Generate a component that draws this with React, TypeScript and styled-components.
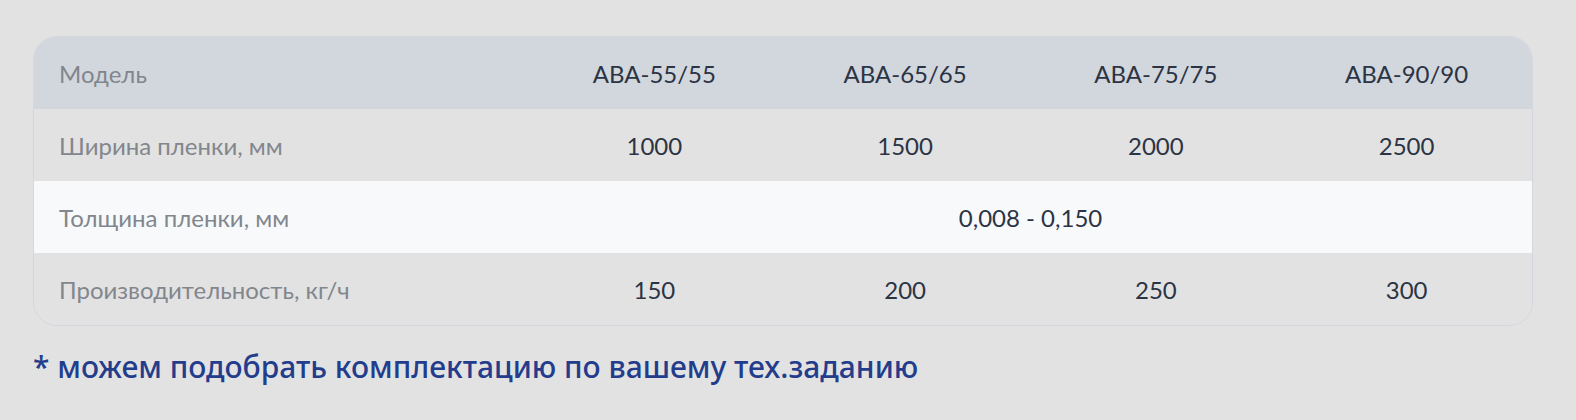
import React from "react";
import styled, { createGlobalStyle } from "styled-components";

const Global = createGlobalStyle`
  html, body { margin: 0; padding: 0; background: #e2e2e2; }
  body { font-family: "Lato", "Noto Sans", sans-serif; }
`;

const Page = styled.div`
  padding: 36px 43px 0 33px;
  display: flex;
  flex-direction: column;
  gap: 21px;
`;

const Table = styled.div`
  width: 1500px;
  box-sizing: border-box;
  border: 1px solid #d3d7de;
  border-radius: 24px;
  overflow: hidden;
  display: grid;
  grid-template-columns: 495px repeat(4, 1fr);
`;

const Row = styled.div<{ $bg: string }>`
  display: contents;
  & > * { background: ${(p) => p.$bg}; }
`;

const Cell = styled.div<{ $span?: number }>`
  height: 72px;
  display: flex;
  align-items: center;
  justify-content: center;
  font-size: 24px;
  color: #2b3444;
  grid-column: ${(p) => (p.$span ? `span ${p.$span}` : "auto")};
`;

const Label = styled.div`
  height: 72px;
  display: flex;
  align-items: center;
  padding-left: 25px;
  font-size: 24px;
  color: #82868d;
`;

const Note = styled.div`
  font-family: "Noto Sans", "Open Sans", sans-serif;
  font-weight: 500;
  font-size: 30px;
  line-height: 40px;
  color: #233d8c;
`;

const models = ["АВА-55/55", "АВА-65/65", "АВА-75/75", "АВА-90/90"];

export default function App() {
  return (
    <>
      <Global />
      <Page>
        <Table>
          <Row $bg="#d2d6dd">
            <Label>Модель</Label>
            {models.map((m) => (
              <Cell key={m}>{m}</Cell>
            ))}
          </Row>
          <Row $bg="#e2e2e2">
            <Label>Ширина пленки, мм</Label>
            {["1000", "1500", "2000", "2500"].map((v) => (
              <Cell key={v}>{v}</Cell>
            ))}
          </Row>
          <Row $bg="#f8f9fb">
            <Label>Толщина пленки, мм</Label>
            <Cell $span={4}>0,008 - 0,150</Cell>
          </Row>
          <Row $bg="#e2e2e2">
            <Label>Производительность, кг/ч</Label>
            {["150", "200", "250", "300"].map((v) => (
              <Cell key={v}>{v}</Cell>
            ))}
          </Row>
        </Table>
        <Note>* можем подобрать комплектацию по вашему тех.заданию</Note>
      </Page>
    </>
  );
}
